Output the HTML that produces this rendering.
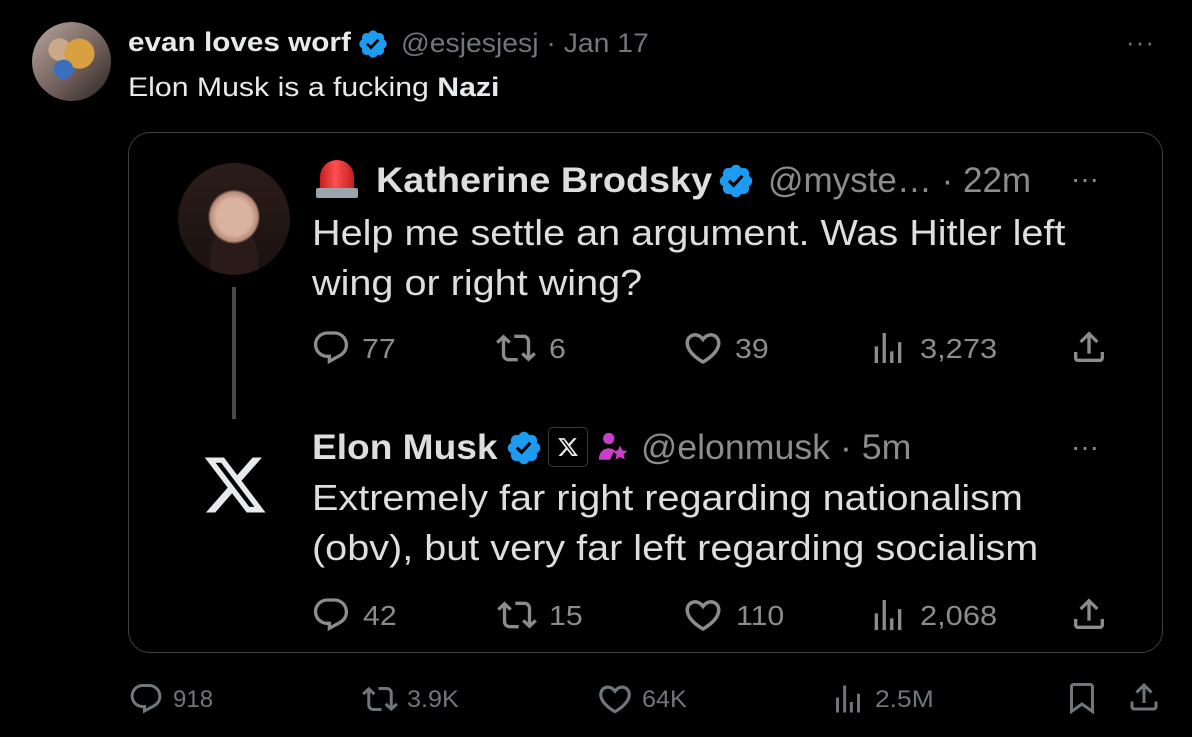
<!DOCTYPE html>
<html><head><meta charset="utf-8"><style>
*{margin:0;padding:0;box-sizing:border-box}
body{width:1192px;height:737px;background:#000;overflow:hidden;position:relative;font-family:"Liberation Sans",Arial,sans-serif;color:#e7e9ea}
.a{position:absolute;white-space:nowrap;transform-origin:0 50%}
.g{color:#71767b}
.cg{color:#8c8c8c}
svg.i{position:absolute}
</style></head><body>
<div class="a" style="left:32px;top:22px;width:79px;height:79px;border-radius:50%;background:radial-gradient(circle at 40% 60%,#3a6fc0 0 14%,transparent 15%),radial-gradient(circle at 60% 40%,#d8a040 0 22%,transparent 23%),radial-gradient(circle at 35% 35%,#c9a98a 0 15%,transparent 16%),linear-gradient(135deg,#b9a6a0,#6b5a55 60%,#2a2422)"></div>
<div class="a" style="left:128px;top:27px;font-size:27px;font-weight:bold;color:#e7e9ea;transform:scaleX(1.1)">evan loves worf</div>
<svg class="i" style="left:357px;top:28px" width="32" height="32" viewBox="0 0 24 24"><use href="#vf"/></svg>
<div class="a g" style="left:401px;top:28px;font-size:27px;transform:scaleX(1.05)">@esjesjesj · Jan 17</div>
<div class="a g" style="left:1126px;top:27px;font-size:26px;letter-spacing:1px">···</div>
<div class="a" style="left:128px;top:72px;font-size:27px;transform:scaleX(1.12)">Elon Musk is a fucking <b>Nazi</b></div>

<div class="a" style="left:128px;top:132px;width:1035px;height:521px;border:1.5px solid #3d3f42;border-radius:22px"></div>
<div class="a" style="left:178px;top:163px;width:112px;height:112px;border-radius:50%;background:radial-gradient(ellipse at 50% 48%,#d9b3a0 0 22%,#b88a78 30%,transparent 33%),radial-gradient(ellipse at 50% 90%,#2a1a18 0 30%,transparent 31%),linear-gradient(#2b1c18,#1a1110)"></div>
<div class="a" style="left:232px;top:287px;width:4px;height:132px;background:#4a4a4a"></div>
<svg class="i" style="left:204px;top:455px" width="62" height="60" viewBox="1 2 22 20"><path fill="#e7e9ea" d="M18.244 2.25h3.308l-7.227 8.26 8.502 11.24H16.17l-5.214-6.817L4.99 21.75H1.68l7.73-8.835L1.254 2.25H8.08l4.713 6.231zm-1.161 17.52h1.833L7.084 4.126H5.117z"/></svg>

<div class="a" style="left:320px;top:160px;width:34px;height:30px;border-radius:17px 17px 3px 3px;background:linear-gradient(90deg,#c41e1e,#ff5050 45%,#c41e1e)"></div>
<div class="a" style="left:316px;top:188px;width:42px;height:10px;background:#9aa4ad;border-radius:2px"></div>
<div class="a" style="left:376px;top:161px;font-size:35px;font-weight:bold;color:#dedede;transform:scaleX(1.08)">Katherine Brodsky</div>
<svg class="i" style="left:717px;top:162px" width="38" height="38" viewBox="0 0 24 24"><use href="#vf"/></svg>
<div class="a cg" style="left:768px;top:161px;font-size:35px">@myste… · 22m</div>
<div class="a cg" style="left:1071px;top:163px;font-size:28px">···</div>
<div class="a" style="left:312px;top:208px;font-size:36px;line-height:50px;color:#dedede;transform:scaleX(1.1);transform-origin:0 0">Help me settle an argument. Was Hitler left<br>wing or right wing?</div>

<div class="a" style="left:312px;top:428px;font-size:35px;font-weight:bold;color:#dedede;transform:scaleX(1.06)">Elon Musk</div>
<svg class="i" style="left:505px;top:429px" width="38" height="38" viewBox="0 0 24 24"><use href="#vf"/></svg>
<div class="a" style="left:548px;top:427px;width:40px;height:40px;border:1.5px solid #3a3a3a;border-radius:5px;background:#000"></div>
<svg class="i" style="left:557px;top:436px" width="22" height="22" viewBox="0 0 24 24"><path fill="#e7e9ea" d="M18.244 2.25h3.308l-7.227 8.26 8.502 11.24H16.17l-5.214-6.817L4.99 21.75H1.68l7.73-8.835L1.254 2.25H8.08l4.713 6.231zm-1.161 17.52h1.833L7.084 4.126H5.117z"/></svg>
<svg class="i" style="left:596px;top:430px" width="34" height="34" viewBox="0 0 24 24"><circle cx="9" cy="6" r="4" fill="#c93fc9"/><path fill="#c93fc9" d="M2 21c0-5 3-8 7-8 2 0 3 .5 4 1.2L10 21z"/><path fill="#c93fc9" d="M17 11l1.6 3.4 3.6.4-2.7 2.5.8 3.6-3.3-1.9-3.3 1.9.8-3.6-2.7-2.5 3.6-.4z"/></svg>
<div class="a cg" style="left:641px;top:428px;font-size:35px;transform:scaleX(1.02)">@elonmusk · 5m</div>
<div class="a cg" style="left:1071px;top:431px;font-size:28px">···</div>
<div class="a" style="left:312px;top:473px;font-size:36px;line-height:50px;color:#dedede;transform:scaleX(1.1);transform-origin:0 0">Extremely far right regarding nationalism<br>(obv), but very far left regarding socialism</div>

<svg width="0" height="0" style="position:absolute"><defs>
<path id="vf" fill="#1d9bf0" d="M22.25 12c0-1.43-.88-2.67-2.19-3.34.46-1.39.2-2.9-.81-3.91s-2.52-1.27-3.91-.81c-.66-1.31-1.91-2.19-3.34-2.19s-2.67.88-3.33 2.19c-1.4-.46-2.91-.2-3.92.81s-1.26 2.52-.8 3.91c-1.31.67-2.2 1.91-2.2 3.34s.89 2.67 2.2 3.34c-.46 1.39-.21 2.9.8 3.91s2.52 1.26 3.91.81c.67 1.31 1.91 2.19 3.34 2.19s2.68-.88 3.34-2.19c1.39.45 2.9.2 3.91-.81s1.27-2.52.81-3.91c1.31-.67 2.19-1.91 2.19-3.34zm-11.71 4.2L6.8 12.46l1.41-1.42 2.26 2.26 4.8-5.23 1.47 1.36-6.2 6.77z"/>
<path id="rp" d="M1.751 10c0-4.42 3.584-8 8.005-8h4.366c4.49 0 8.129 3.64 8.129 8.13 0 2.96-1.607 5.68-4.196 7.11l-8.054 4.46v-3.69h-.067c-4.49.1-8.183-3.51-8.183-8.01zm8.005-6c-3.317 0-6.005 2.69-6.005 6 0 3.37 2.77 6.08 6.138 6.01l.351-.01h1.761v2.3l5.087-2.81c1.951-1.08 3.163-3.13 3.163-5.36 0-3.39-2.744-6.13-6.129-6.13H9.756z"/>
<path id="rt" d="M4.5 3.88l4.432 4.14-1.364 1.46L5.5 7.55V16c0 1.1.896 2 2 2H13v2H7.5c-2.209 0-4-1.79-4-4V7.55L1.432 9.48.068 8.02 4.5 3.88zM16.5 6H11V4h5.5c2.209 0 4 1.79 4 4v8.45l2.068-1.93 1.364 1.46-4.432 4.14-4.432-4.14 1.364-1.46 2.068 1.93V8c0-1.1-.896-2-2-2z"/>
<path id="lk" d="M16.697 5.5c-1.222-.06-2.679.51-3.89 2.16l-.805 1.09-.806-1.09C9.984 6.01 8.526 5.44 7.304 5.5c-1.243.07-2.349.78-2.91 1.91-.552 1.12-.633 2.78.479 4.82 1.074 1.97 3.257 4.27 7.129 6.61 3.87-2.34 6.052-4.64 7.126-6.61 1.111-2.04 1.03-3.7.477-4.82-.561-1.13-1.666-1.84-2.908-1.91zm4.187 7.69c-1.351 2.48-4.001 5.12-8.379 7.67l-.503.3-.504-.3c-4.379-2.55-7.029-5.19-8.382-7.67-1.36-2.5-1.41-4.86-.514-6.67.887-1.79 2.647-2.91 4.601-3.01 1.651-.09 3.368.56 4.798 2.01 1.429-1.45 3.146-2.1 4.796-2.01 1.954.1 3.714 1.22 4.601 3.01.896 1.81.846 4.17-.514 6.67z"/>
<path id="vw" d="M8.75 21V3h2v18h-2zM18 21V8.5h2V21h-2zM4 21l.004-10h2L6 21H4zm9.248 0v-7h2v7h-2z"/>
<path id="sh" d="M12 2.59l5.7 5.7-1.41 1.42L13 6.41V16h-2V6.41l-3.3 3.3-1.41-1.42L12 2.59zM21 15l-.02 3.51c0 1.38-1.12 2.49-2.5 2.49H5.5C4.11 21 3 19.88 3 18.5V15h2v3.5c0 .28.22.5.5.5h12.98c.28 0 .5-.22.5-.5L19 15h2z"/>
<path id="bm" d="M4 4.5C4 3.12 5.119 2 6.5 2h11C18.881 2 20 3.12 20 4.5v18.44l-8-5.71-8 5.71V4.5zM6.5 4c-.276 0-.5.22-.5.5v14.56l6-4.29 6 4.29V4.5c0-.28-.224-.5-.5-.5h-11z"/>
</defs></svg>

<svg class="i" style="left:311px;top:328px" width="40" height="40" viewBox="0 0 24 24" fill="#8c8c8c"><use href="#rp"/></svg>
<div class="a cg" style="left:362px;top:333px;font-size:28px;transform:scaleX(1.08)">77</div>
<svg class="i" style="left:494px;top:328px" width="44" height="40" viewBox="0 0 24 24" fill="#8c8c8c"><use href="#rt"/></svg>
<div class="a cg" style="left:549px;top:333px;font-size:28px;transform:scaleX(1.08)">6</div>
<svg class="i" style="left:682px;top:327px" width="42" height="42" viewBox="0 0 24 24" fill="#8c8c8c"><use href="#lk"/></svg>
<div class="a cg" style="left:735px;top:333px;font-size:28px;transform:scaleX(1.08)">39</div>
<svg class="i" style="left:868px;top:328px" width="40" height="40" viewBox="0 0 24 24" fill="#8c8c8c"><use href="#vw"/></svg>
<div class="a cg" style="left:920px;top:333px;font-size:28px;transform:scaleX(1.1)">3,273</div>
<svg class="i" style="left:1069px;top:327px" width="40" height="40" viewBox="0 0 24 24" fill="#8c8c8c"><use href="#sh"/></svg>

<svg class="i" style="left:311px;top:595px" width="40" height="40" viewBox="0 0 24 24" fill="#8c8c8c"><use href="#rp"/></svg>
<div class="a cg" style="left:363px;top:600px;font-size:28px;transform:scaleX(1.08)">42</div>
<svg class="i" style="left:495px;top:595px" width="44" height="40" viewBox="0 0 24 24" fill="#8c8c8c"><use href="#rt"/></svg>
<div class="a cg" style="left:549px;top:600px;font-size:28px;transform:scaleX(1.08)">15</div>
<svg class="i" style="left:682px;top:594px" width="42" height="42" viewBox="0 0 24 24" fill="#8c8c8c"><use href="#lk"/></svg>
<div class="a cg" style="left:736px;top:600px;font-size:28px;transform:scaleX(1.08)">110</div>
<svg class="i" style="left:868px;top:595px" width="40" height="40" viewBox="0 0 24 24" fill="#8c8c8c"><use href="#vw"/></svg>
<div class="a cg" style="left:920px;top:600px;font-size:28px;transform:scaleX(1.1)">2,068</div>
<svg class="i" style="left:1069px;top:594px" width="40" height="40" viewBox="0 0 24 24" fill="#8c8c8c"><use href="#sh"/></svg>

<svg class="i" style="left:128px;top:681px" width="36" height="36" viewBox="0 0 24 24" fill="#71767b"><use href="#rp"/></svg>
<div class="a g" style="left:173px;top:686px;font-size:24px">918</div>
<svg class="i" style="left:361px;top:681px" width="38" height="36" viewBox="0 0 24 24" fill="#71767b"><use href="#rt"/></svg>
<div class="a g" style="left:407px;top:686px;font-size:24px;transform:scaleX(1.05)">3.9K</div>
<svg class="i" style="left:596px;top:680px" width="38" height="38" viewBox="0 0 24 24" fill="#71767b"><use href="#lk"/></svg>
<div class="a g" style="left:642px;top:686px;font-size:24px;transform:scaleX(1.05)">64K</div>
<svg class="i" style="left:830px;top:681px" width="36" height="36" viewBox="0 0 24 24" fill="#71767b"><use href="#vw"/></svg>
<div class="a g" style="left:875px;top:686px;font-size:24px;transform:scaleX(1.1)">2.5M</div>
<svg class="i" style="left:1064px;top:680px" width="36" height="36" viewBox="0 0 24 24" fill="#71767b"><use href="#bm"/></svg>
<svg class="i" style="left:1126px;top:679px" width="36" height="36" viewBox="0 0 24 24" fill="#71767b"><use href="#sh"/></svg>
</body></html>
